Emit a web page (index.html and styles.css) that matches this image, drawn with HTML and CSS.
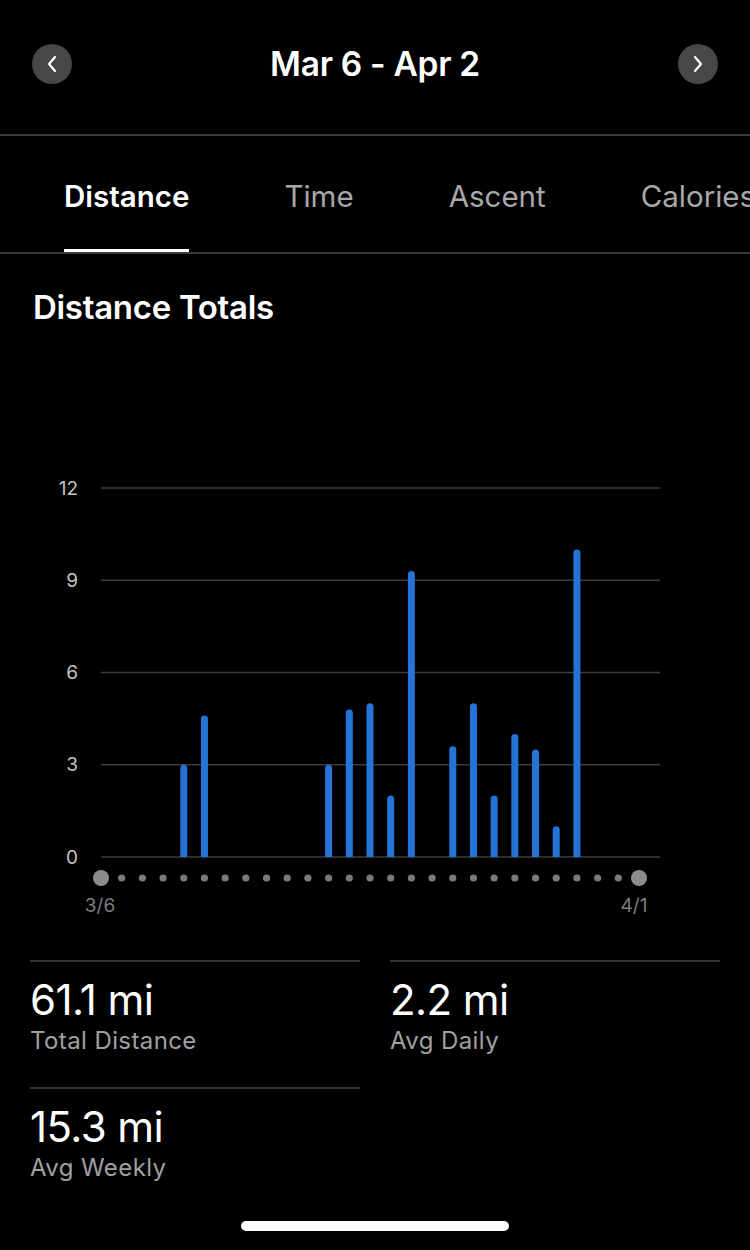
FILE: index.html
```html
<!DOCTYPE html>
<html>
<head>
  <meta charset="UTF-8" />
  <title>Distance Totals</title>
  <link rel="stylesheet" href="styles.css">
</head>
<body>
  <div class="screen">
    <div class="header">
      <button type="button" class="nav-btn" aria-label="Previous">
        <svg width="12" height="18" viewBox="0 0 12 18"><polyline points="9,2 3,9 9,16" /></svg>
      </button>
      <div class="title">Mar 6 - Apr 2</div>
      <button type="button" class="nav-btn" aria-label="Next">
        <svg width="12" height="18" viewBox="0 0 12 18"><polyline points="3,2 9,9 3,16" /></svg>
      </button>
    </div>

    <div class="tabs">
      <div class="tab active">Distance</div>
      <div class="tab">Time</div>
      <div class="tab">Ascent</div>
      <div class="tab">Calories</div>
    </div>

    <h2 class="section-title">Distance Totals</h2>

    <svg class="chart" id="chart" width="750" height="450" viewBox="0 0 750 450"></svg>

    <div class="stats">
      <div class="stat">
        <div class="stat-value">61.1 mi</div>
        <div class="stat-label">Total Distance</div>
      </div>
      <div class="stat">
        <div class="stat-value">2.2 mi</div>
        <div class="stat-label">Avg Daily</div>
      </div>
      <div class="stat">
        <div class="stat-value">15.3 mi</div>
        <div class="stat-label">Avg Weekly</div>
      </div>
    </div>

    <div class="home-indicator"></div>
  </div>

  <script>
    // Daily distances in miles, one per day from 3/6 to 4/1
    var days = [0, 0, 0, 0, 3.0, 4.6, 0, 0, 0, 0, 0, 3.0, 4.8, 5.0, 2.0, 9.3,
                0, 3.6, 5.0, 2.0, 4.0, 3.5, 1.0, 10.0, 0, 0, 0];

    var svgNS = "http://www.w3.org/2000/svg";
    var chart = document.getElementById("chart");

    // Chart geometry
    var left = 101;
    var right = 660;
    var base = 387;
    var unit = 30.75;
    var step = (639 - 101) / (days.length - 1);

    function el(name, attrs, cls) {
      var node = document.createElementNS(svgNS, name);
      for (var key in attrs) {
        node.setAttribute(key, attrs[key]);
      }
      if (cls) {
        node.setAttribute("class", cls);
      }
      chart.appendChild(node);
      return node;
    }

    // Grid lines and y axis labels
    for (var v = 0; v <= 12; v += 3) {
      var y = base - v * unit;
      el("line", { x1: left, x2: right, y1: y, y2: y }, "grid");
      var label = el("text", { x: 78, y: y + 6.5, "text-anchor": "end" }, "y-label");
      label.textContent = v;
    }

    // Bars, square at the bottom and rounded on top
    for (var i = 0; i < days.length; i++) {
      if (days[i] === 0) continue;
      var x = left + i * step;
      var barTop = base - days[i] * unit;
      var r = 3.5;
      var d = "M" + (x - r) + " " + base +
              " V" + (barTop + r) +
              " A" + r + " " + r + " 0 0 1 " + (x + r) + " " + (barTop + r) +
              " V" + base + " Z";
      el("path", { d: d }, "bar");
    }

    // Day dots
    for (var j = 0; j < days.length; j++) {
      var isEnd = j === 0 || j === days.length - 1;
      el("circle", { cx: left + j * step, cy: 408, r: isEnd ? 8 : 3.6 }, isEnd ? "dot dot-end" : "dot");
    }

    // X axis labels
    var first = el("text", { x: 100, y: 442, "text-anchor": "middle" }, "x-label");
    first.textContent = "3/6";
    var last = el("text", { x: 634, y: 442, "text-anchor": "middle" }, "x-label");
    last.textContent = "4/1";
  </script>
</body>
</html>
```

FILE: styles.css
```css
body {
  margin: 0;
  background-color: #000;
  color: #fff;
  font-family: Inter, "Noto Sans", sans-serif;
}

.screen {
  width: 750px;
  height: 1250px;
  overflow: hidden;
}

.header {
  display: flex;
  justify-content: space-between;
  align-items: flex-start;
  height: 136px;
  padding: 44px 32px 0;
  box-sizing: border-box;
  border-bottom: 2px solid #3a3a3a;
}

.nav-btn {
  width: 40px;
  height: 40px;
  padding: 0;
  border: none;
  border-radius: 50%;
  background-color: #474747;
  display: flex;
  align-items: center;
  justify-content: center;
}

.nav-btn polyline {
  fill: none;
  stroke: #fff;
  stroke-width: 2.2;
  stroke-linecap: round;
  stroke-linejoin: round;
}

.title {
  font-size: 33.5px;
  font-weight: 600;
  line-height: 40px;
  letter-spacing: -0.3px;
}

.tabs {
  display: flex;
  gap: 95px;
  padding-left: 64px;
  border-bottom: 2px solid #3a3a3a;
  overflow: hidden;
  white-space: nowrap;
}

.tab {
  padding: 42px 0 35px;
  font-size: 29.5px;
  line-height: 36px;
  color: #a8a8a8;
  border-bottom: 3px solid transparent;
}

.tab.active {
  color: #fff;
  font-weight: 600;
  border-bottom-color: #fff;
}

.section-title {
  margin: 35px 0 0 33px;
  font-size: 33px;
  font-weight: 600;
  line-height: 36px;
  letter-spacing: -0.3px;
}

.chart {
  display: block;
  margin-top: 145px;
}

.grid {
  stroke: #3c3c3c;
  stroke-width: 1.5;
}

.y-label {
  fill: #c4c4c4;
  font-size: 19px;
}

.x-label {
  fill: #7c7c7c;
  font-size: 19px;
}

.bar {
  fill: #2474d8;
}

.dot {
  fill: #7a7a7a;
}

.dot-end {
  fill: #8c8c8c;
}

.stats {
  display: grid;
  grid-template-columns: 330px 330px;
  column-gap: 30px;
  padding: 0 30px;
  margin-top: 40px;
}

.stat {
  height: 127px;
  box-sizing: border-box;
  border-top: 2px solid #333;
  padding-top: 14px;
}

.stat-value {
  font-size: 42px;
  line-height: 48px;
  letter-spacing: -0.6px;
}

.stat-label {
  margin-top: 3px;
  font-size: 24px;
  line-height: 28px;
  letter-spacing: 0.4px;
  color: #a0a0a0;
}

.home-indicator {
  width: 268px;
  height: 10px;
  margin: 7px auto 0;
  border-radius: 5px;
  background-color: #fff;
}
```
